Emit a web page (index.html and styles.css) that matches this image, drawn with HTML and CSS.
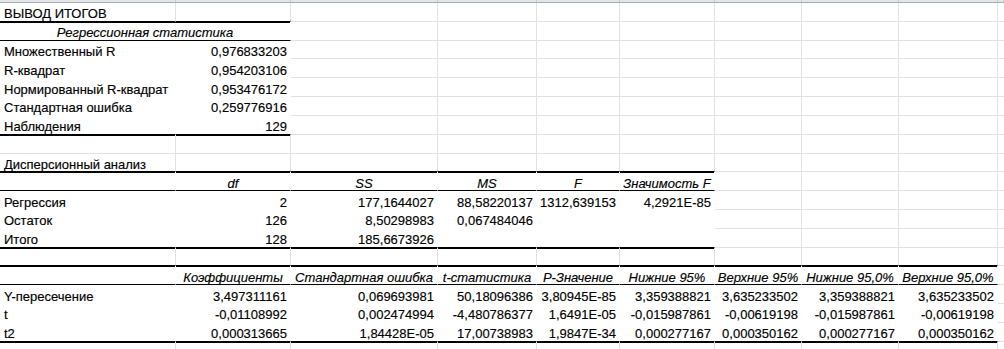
FILE: index.html
```html
<!DOCTYPE html>
<html lang="ru">
<head>
<meta charset="utf-8">
<title>Вывод итогов</title>
<link rel="stylesheet" href="styles.css">
</head>
<body>
<div class="sheet">
  <div class="colhead">
    <span></span><span></span><span></span><span></span><span></span><span></span><span></span><span></span><span></span><span></span>
  </div>

  <div class="row">
    <div class="c bb">ВЫВОД ИТОГОВ</div><div class="c bb"></div><div class="c"></div><div class="c"></div><div class="c"></div><div class="c"></div><div class="c"></div><div class="c"></div><div class="c"></div><div class="c"></div>
  </div>
  <div class="row">
    <div class="c t bt bb span2 hd">Регрессионная статистика</div><div class="c"></div><div class="c"></div><div class="c"></div><div class="c"></div><div class="c"></div><div class="c"></div><div class="c"></div><div class="c"></div>
  </div>
  <div class="row">
    <div class="c t">Множественный R</div><div class="c t num">0,976833203</div><div class="c"></div><div class="c"></div><div class="c"></div><div class="c"></div><div class="c"></div><div class="c"></div><div class="c"></div><div class="c"></div>
  </div>
  <div class="row">
    <div class="c t">R-квадрат</div><div class="c t num">0,954203106</div><div class="c"></div><div class="c"></div><div class="c"></div><div class="c"></div><div class="c"></div><div class="c"></div><div class="c"></div><div class="c"></div>
  </div>
  <div class="row">
    <div class="c t">Нормированный R-квадрат</div><div class="c t num">0,953476172</div><div class="c"></div><div class="c"></div><div class="c"></div><div class="c"></div><div class="c"></div><div class="c"></div><div class="c"></div><div class="c"></div>
  </div>
  <div class="row">
    <div class="c t">Стандартная ошибка</div><div class="c t num">0,259776916</div><div class="c"></div><div class="c"></div><div class="c"></div><div class="c"></div><div class="c"></div><div class="c"></div><div class="c"></div><div class="c"></div>
  </div>
  <div class="row">
    <div class="c t bb">Наблюдения</div><div class="c t bb num">129</div><div class="c"></div><div class="c"></div><div class="c"></div><div class="c"></div><div class="c"></div><div class="c"></div><div class="c"></div><div class="c"></div>
  </div>
  <div class="row">
    <div class="c bt"></div><div class="c bt"></div><div class="c"></div><div class="c"></div><div class="c"></div><div class="c"></div><div class="c"></div><div class="c"></div><div class="c"></div><div class="c"></div>
  </div>

  <div class="row">
    <div class="c bb">Дисперсионный анализ</div><div class="c bb"></div><div class="c bb"></div><div class="c bb"></div><div class="c bb"></div><div class="c bb"></div><div class="c"></div><div class="c"></div><div class="c"></div><div class="c"></div>
  </div>
  <div class="row">
    <div class="c t bt bb"></div><div class="c t bt bb hd">df</div><div class="c t bt bb hd">SS</div><div class="c t bt bb hd">MS</div><div class="c t bt bb hd">F</div><div class="c t bt bb hd">Значимость F</div><div class="c"></div><div class="c"></div><div class="c"></div><div class="c"></div>
  </div>
  <div class="row">
    <div class="c t">Регрессия</div><div class="c t num">2</div><div class="c t num">177,1644027</div><div class="c t num">88,58220137</div><div class="c t num">1312,639153</div><div class="c t num">4,2921E-85</div><div class="c"></div><div class="c"></div><div class="c"></div><div class="c"></div>
  </div>
  <div class="row">
    <div class="c t">Остаток</div><div class="c t num">126</div><div class="c t num">8,50298983</div><div class="c t num">0,067484046</div><div class="c t"></div><div class="c t"></div><div class="c"></div><div class="c"></div><div class="c"></div><div class="c"></div>
  </div>
  <div class="row">
    <div class="c t bb">Итого</div><div class="c t bb num">128</div><div class="c t bb num">185,6673926</div><div class="c t bb"></div><div class="c t bb"></div><div class="c t bb"></div><div class="c"></div><div class="c"></div><div class="c"></div><div class="c"></div>
  </div>
  <div class="row">
    <div class="c bt bb"></div><div class="c bt bb"></div><div class="c bt bb"></div><div class="c bt bb"></div><div class="c bt bb"></div><div class="c bt bb"></div><div class="c bb"></div><div class="c bb"></div><div class="c bb"></div><div class="c"></div>
  </div>

  <div class="row">
    <div class="c t bt bb"></div><div class="c t bt bb hd">Коэффициенты</div><div class="c t bt bb hd">Стандартная ошибка</div><div class="c t bt bb hd">t-статистика</div><div class="c t bt bb hd">P-Значение</div><div class="c t bt bb hd">Нижние 95%</div><div class="c t bt bb hd">Верхние 95%</div><div class="c t bt bb hd">Нижние 95,0%</div><div class="c t bt bb hd">Верхние 95,0%</div><div class="c"></div>
  </div>
  <div class="row">
    <div class="c t">Y-пересечение</div><div class="c t num">3,497311161</div><div class="c t num">0,069693981</div><div class="c t num">50,18096386</div><div class="c t num">3,80945E-85</div><div class="c t num">3,359388821</div><div class="c t num">3,635233502</div><div class="c t num">3,359388821</div><div class="c t num">3,635233502</div><div class="c"></div>
  </div>
  <div class="row">
    <div class="c t">t</div><div class="c t num">-0,01108992</div><div class="c t num">0,002474994</div><div class="c t num">-4,480786377</div><div class="c t num">1,6491E-05</div><div class="c t num">-0,015987861</div><div class="c t num">-0,00619198</div><div class="c t num">-0,015987861</div><div class="c t num">-0,00619198</div><div class="c"></div>
  </div>
  <div class="row">
    <div class="c t bb">t2</div><div class="c t bb num">0,000313665</div><div class="c t bb num">1,84428E-05</div><div class="c t bb num">17,00738983</div><div class="c t bb num">1,9847E-34</div><div class="c t bb num">0,000277167</div><div class="c t bb num">0,000350162</div><div class="c t bb num">0,000277167</div><div class="c t bb num">0,000350162</div><div class="c"></div>
  </div>
  <div class="row">
    <div class="c bt"></div><div class="c bt"></div><div class="c bt"></div><div class="c bt"></div><div class="c bt"></div><div class="c bt"></div><div class="c bt"></div><div class="c bt"></div><div class="c bt"></div><div class="c"></div>
  </div>
</div>
</body>
</html>
```

FILE: styles.css
```css
html, body {
  margin: 0;
  padding: 0;
  background: #ffffff;
}

.sheet {
  width: 1004px;
  height: 349px;
  overflow: hidden;
  font-family: "Liberation Sans", Arial, sans-serif;
  font-size: 13px;
  color: #000000;
}

.colhead,
.row {
  display: grid;
  grid-template-columns: 176px 115px 147px 99px 83px 95px 87px 97px 99px 1fr;
}

.colhead {
  height: 3px;
  box-sizing: border-box;
  background: #e3e6ea;
  border-bottom: 1px solid #a8adb4;
}

.colhead span {
  border-right: 1px solid #c6cad0;
}

.row {
  height: 18.82px;
}

.c {
  box-sizing: border-box;
  border-right: 1px solid #e1e1e1;
  border-bottom: 1px solid #e1e1e1;
  padding: 4px 3px 0 4px;
  display: flex;
  align-items: center;
  white-space: nowrap;
  overflow: visible;
  line-height: 1;
  -webkit-text-stroke: 0.15px #000000;
}

.c.t {
  border-right-color: #ffffff;
  border-bottom-color: #ffffff;
}

.c.bb {
  border-bottom-color: #000000;
}

.c.bt {
  box-shadow: inset 0 1px 0 #000000;
}

.num {
  justify-content: flex-end;
}

.hd {
  justify-content: center;
  font-style: italic;
  padding-left: 0;
  padding-right: 0;
}

.span2 {
  grid-column: span 2;
}
```
